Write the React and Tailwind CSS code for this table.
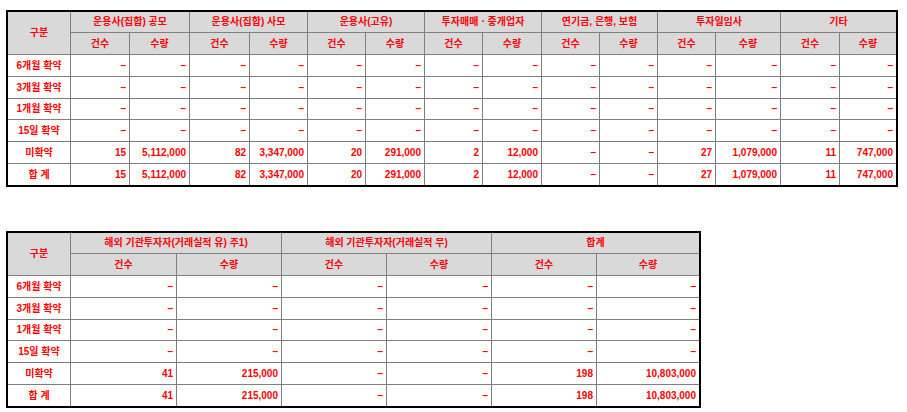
import React from "react";

const DASH = "–";
const labels = ["6개월 확약", "3개월 확약", "1개월 확약", "15일 확약", "미확약", "합 계"];

const groups1 = [
  "운용사(집합) 공모",
  "운용사(집합) 사모",
  "운용사(고유)",
  "투자매매ㆍ중개업자",
  "연기금, 은행, 보험",
  "투자일임사",
  "기타",
];
const totals1 = ["15", "5,112,000", "82", "3,347,000", "20", "291,000", "2", "12,000", DASH, DASH, "27", "1,079,000", "11", "747,000"];

const groups2 = ["해외 기관투자자(거래실적 유) 주1)", "해외 기관투자자(거래실적 무)", "합계"];
const totals2 = ["41", "215,000", DASH, DASH, "198", "10,803,000"];

const font = { fontFamily: '"Liberation Sans", "Noto Sans CJK KR", sans-serif' };

const Head = ({ children, className = "" }) => (
  <div className={`bg-[#d9d9d9] flex items-center justify-center ${className}`}>{children}</div>
);

const StatTable = ({ groups, totals, colsClass, className = "" }) => {
  const n = groups.length * 2;
  const dashes = Array(n).fill(DASH);
  const rows = labels.map((label, i) => ({ label, values: i < 4 ? dashes : totals }));

  return (
    <div className={`grid ${colsClass} gap-px bg-[#808080] border-2 border-black ${className}`}>
      <Head className="row-span-2">구분</Head>
      {groups.map((g) => (
        <Head key={g} className="col-span-2 h-[20px]">{g}</Head>
      ))}
      {groups.map((g) => (
        <React.Fragment key={g + "-sub"}>
          <Head className="h-[21px]">건수</Head>
          <Head className="h-[21px]">수량</Head>
        </React.Fragment>
      ))}
      {rows.map((r, i) => {
        // third data row is a pixel shorter in the source
        const h = i === 2 ? "h-[20px]" : "h-[21px]";
        return (
          <React.Fragment key={r.label}>
            <div className={`bg-white flex items-center justify-center ${h}`}>{r.label}</div>
            {r.values.map((v, j) => (
              <div key={j} className={`bg-white flex items-center justify-end pr-[3px] ${h}`}>{v}</div>
            ))}
          </React.Fragment>
        );
      })}
    </div>
  );
};

export default function App() {
  return (
    <div className="bg-white w-[907px] h-[412px] pl-[6px] pt-[10px] text-[10px] font-bold text-[#ff0000] leading-none" style={font}>
      <StatTable
        groups={groups1}
        totals={totals1}
        colsClass="grid-cols-[62px_58px_59px_59px_57px_57px_58px_57px_58px_57px_57px_57px_64px_58px_56px] w-[892px]"
      />
      <StatTable
        groups={groups2}
        totals={totals2}
        colsClass="grid-cols-[62px_105px_104px_104px_104px_104px_102px] w-[695px]"
        className="mt-[44px]"
      />
    </div>
  );
}
